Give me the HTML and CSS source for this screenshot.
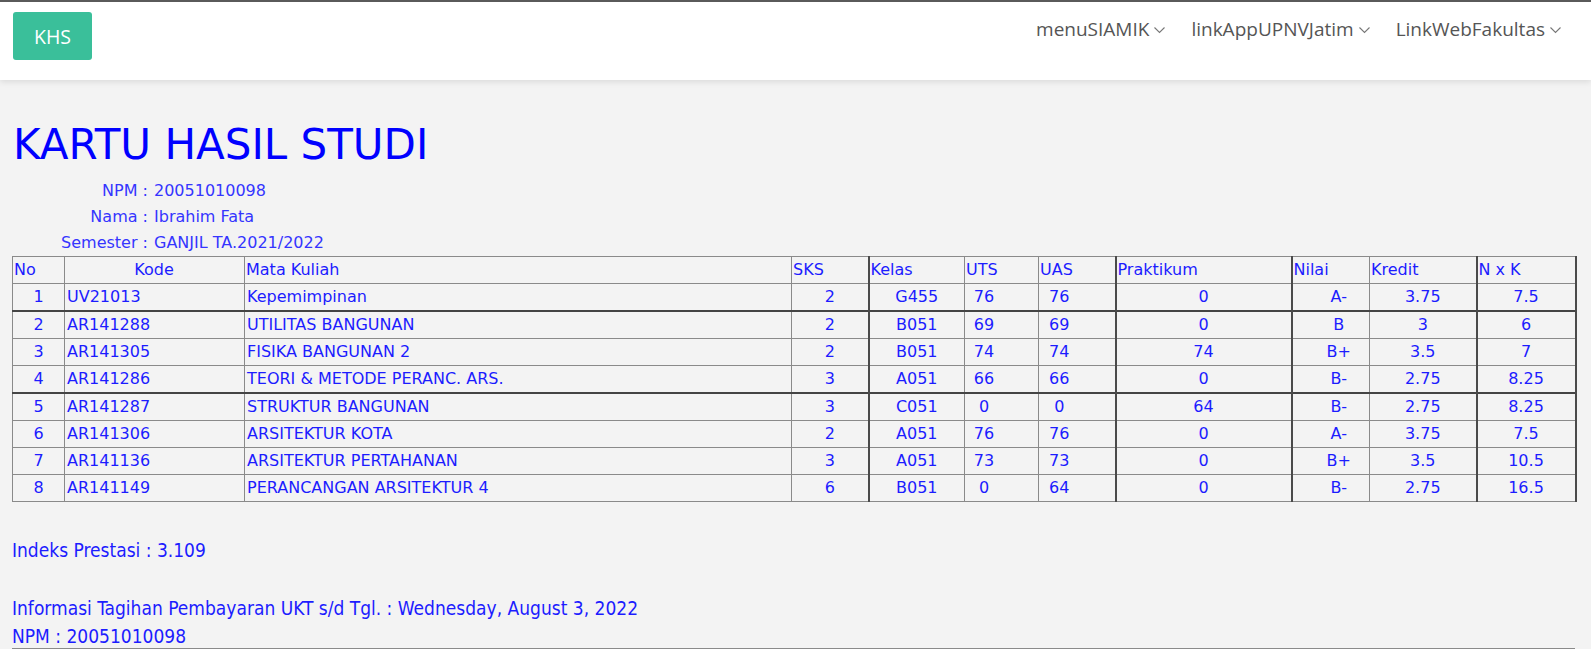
FILE: index.html
```html
<!DOCTYPE html>
<html>
<head>
<meta charset="utf-8">
<title>KHS</title>
<link rel="stylesheet" href="styles.css">
</head>
<body>
<header class="navbar">
  <a class="brand">KHS</a>
  <nav class="menu">
    <span class="menu-item">menuSIAMIK<svg class="chev" viewBox="0 0 12 8"><polyline points="1,1.5 6,6.5 11,1.5"/></svg></span>
    <span class="menu-item">linkAppUPNVJatim<svg class="chev" viewBox="0 0 12 8"><polyline points="1,1.5 6,6.5 11,1.5"/></svg></span>
    <span class="menu-item">LinkWebFakultas<svg class="chev" viewBox="0 0 12 8"><polyline points="1,1.5 6,6.5 11,1.5"/></svg></span>
  </nav>
</header>

<main class="content">
  <h1 class="title">KARTU HASIL STUDI</h1>
  <div class="info">
    <span class="lbl">NPM :</span><span class="val">20051010098</span>
    <span class="lbl">Nama :</span><span class="val">Ibrahim Fata</span>
    <span class="lbl">Semester :</span><span class="val">GANJIL TA.2021/2022</span>
  </div>

  <table class="khs">
    <colgroup>
      <col class="c-no"><col class="c-kode"><col class="c-mk"><col class="c-sks"><col class="c-kelas"><col class="c-uts"><col class="c-uas"><col class="c-prak"><col class="c-nilai"><col class="c-kredit"><col class="c-nxk">
    </colgroup>
    <thead>
      <tr>
        <th>No</th><th class="ctr">Kode</th><th>Mata Kuliah</th><th>SKS</th><th class="dl">Kelas</th><th>UTS</th><th>UAS</th><th class="dl">Praktikum</th><th class="dl">Nilai</th><th>Kredit</th><th class="dl dr">N x K</th>
      </tr>
    </thead>
    <tbody>
      <tr><td class="ctr">1</td><td>UV21013</td><td>Kepemimpinan</td><td class="ctr">2</td><td class="ctr dl">G455</td><td class="num">76</td><td class="num">76</td><td class="ctr dl">0</td><td class="ctr dl nl">A-</td><td class="ctr">3.75</td><td class="ctr dl dr">7.5</td></tr>
      <tr class="dt"><td class="ctr">2</td><td>AR141288</td><td>UTILITAS BANGUNAN</td><td class="ctr">2</td><td class="ctr dl">B051</td><td class="num">69</td><td class="num">69</td><td class="ctr dl">0</td><td class="ctr dl nl">B</td><td class="ctr">3</td><td class="ctr dl dr">6</td></tr>
      <tr><td class="ctr">3</td><td>AR141305</td><td>FISIKA BANGUNAN 2</td><td class="ctr">2</td><td class="ctr dl">B051</td><td class="num">74</td><td class="num">74</td><td class="ctr dl">74</td><td class="ctr dl nl">B+</td><td class="ctr">3.5</td><td class="ctr dl dr">7</td></tr>
      <tr><td class="ctr">4</td><td>AR141286</td><td>TEORI &amp; METODE PERANC. ARS.</td><td class="ctr">3</td><td class="ctr dl">A051</td><td class="num">66</td><td class="num">66</td><td class="ctr dl">0</td><td class="ctr dl nl">B-</td><td class="ctr">2.75</td><td class="ctr dl dr">8.25</td></tr>
      <tr class="dt"><td class="ctr">5</td><td>AR141287</td><td>STRUKTUR BANGUNAN</td><td class="ctr">3</td><td class="ctr dl">C051</td><td class="num">0</td><td class="num">0</td><td class="ctr dl">64</td><td class="ctr dl nl">B-</td><td class="ctr">2.75</td><td class="ctr dl dr">8.25</td></tr>
      <tr><td class="ctr">6</td><td>AR141306</td><td>ARSITEKTUR KOTA</td><td class="ctr">2</td><td class="ctr dl">A051</td><td class="num">76</td><td class="num">76</td><td class="ctr dl">0</td><td class="ctr dl nl">A-</td><td class="ctr">3.75</td><td class="ctr dl dr">7.5</td></tr>
      <tr><td class="ctr">7</td><td>AR141136</td><td>ARSITEKTUR PERTAHANAN</td><td class="ctr">3</td><td class="ctr dl">A051</td><td class="num">73</td><td class="num">73</td><td class="ctr dl">0</td><td class="ctr dl nl">B+</td><td class="ctr">3.5</td><td class="ctr dl dr">10.5</td></tr>
      <tr><td class="ctr">8</td><td>AR141149</td><td>PERANCANGAN ARSITEKTUR 4</td><td class="ctr">6</td><td class="ctr dl">B051</td><td class="num">0</td><td class="num">64</td><td class="ctr dl">0</td><td class="ctr dl nl">B-</td><td class="ctr">2.75</td><td class="ctr dl dr">16.5</td></tr>
    </tbody>
  </table>

  <p class="ip">Indeks Prestasi : 3.109</p>
  <p class="tagihan">Informasi Tagihan Pembayaran UKT s/d Tgl. : Wednesday, August 3, 2022</p>
  <p class="tagihan npm">NPM : 20051010098</p>

  <div class="next-table">
    <div class="nt-cell first"></div>
    <div class="nt-cell"></div>
  </div>
</main>
</body>
</html>
```

FILE: styles.css
```css
html, body {
  margin: 0;
  padding: 0;
}

body {
  background: #f3f3f3;
  font-family: "DejaVu Sans", Verdana, sans-serif;
  overflow: hidden;
}

.navbar {
  box-sizing: border-box;
  height: 80px;
  background: #ffffff;
  border-top: 2px solid #5a5a5a;
  box-shadow: 0 2px 6px rgba(0, 0, 0, 0.10);
  display: flex;
  justify-content: space-between;
  align-items: flex-start;
  padding: 10px 29px 0 13px;
  position: relative;
}

.brand {
  display: flex;
  align-items: center;
  justify-content: center;
  width: 79px;
  height: 48px;
  background: #3abf9a;
  border-radius: 3px;
  color: #ffffff;
  font-family: "Open Sans", sans-serif;
  font-size: 19.5px;
}

.menu {
  display: flex;
  gap: 25px;
  margin-top: 3px;
}

.menu-item {
  display: flex;
  align-items: center;
  font-family: "Open Sans", sans-serif;
  font-size: 19px;
  color: #555555;
  line-height: 28px;
}

.chev {
  width: 13px;
  height: 8px;
  margin-left: 4px;
  margin-top: 2px;
}

.chev polyline {
  fill: none;
  stroke: #777777;
  stroke-width: 1.1;
}

.content {
  padding: 41px 0 0 12px;
}

.title {
  margin: 0 0 9px 1px;
  font-size: 42px;
  font-weight: normal;
  line-height: 48px;
  color: #0000ff;
}

.info {
  display: grid;
  grid-template-columns: 136px auto;
  column-gap: 6px;
  justify-content: start;
  font-size: 16px;
  line-height: 26px;
  color: #3535ff;
}

.lbl {
  text-align: right;
}

.khs {
  border-collapse: collapse;
  table-layout: fixed;
  width: 1563px;
  font-size: 16px;
  color: #1c1cff;
}

.c-no { width: 52px; }
.c-kode { width: 180px; }
.c-mk { width: 547px; }
.c-sks { width: 77px; }
.c-kelas { width: 96px; }
.c-uts { width: 74px; }
.c-uas { width: 77px; }
.c-prak { width: 176px; }
.c-nilai { width: 78px; }
.c-kredit { width: 107px; }
.c-nxk { width: 99px; }

.khs th,
.khs td {
  border: 1px solid #8a8a8a;
  height: 26px;
  padding: 0 2px;
  line-height: 26px;
  font-weight: normal;
  text-align: left;
  white-space: nowrap;
  overflow: hidden;
}

.khs th {
  padding-left: 1px;
}

.khs .ctr {
  text-align: center;
}

.khs td.num {
  text-align: center;
  padding-right: 37px;
}

.khs td.nl {
  padding-left: 18px;
}

.khs .dl {
  border-left: 2px solid #4a4a4a;
}

.khs .dr {
  border-right: 2px solid #4a4a4a;
}

.khs tr.dt td {
  border-top: 2px solid #444444;
}

.ip,
.tagihan {
  margin: 0;
  font-family: "DejaVu Sans", sans-serif;
  font-stretch: condensed;
  font-size: 19px;
  color: #1c1cff;
  line-height: 20px;
}

.ip {
  margin-top: 38px;
}

.tagihan {
  margin-top: 38px;
}

.tagihan.npm {
  margin-top: 8px;
}

.next-table {
  display: grid;
  grid-template-columns: 676px 887px;
  margin-top: 2px;
  border-top: 1px solid #8a8a8a;
  width: 1563px;
}

.nt-cell {
  height: 20px;
}

.nt-cell.first {
  border-right: 1px solid #555555;
}
```
